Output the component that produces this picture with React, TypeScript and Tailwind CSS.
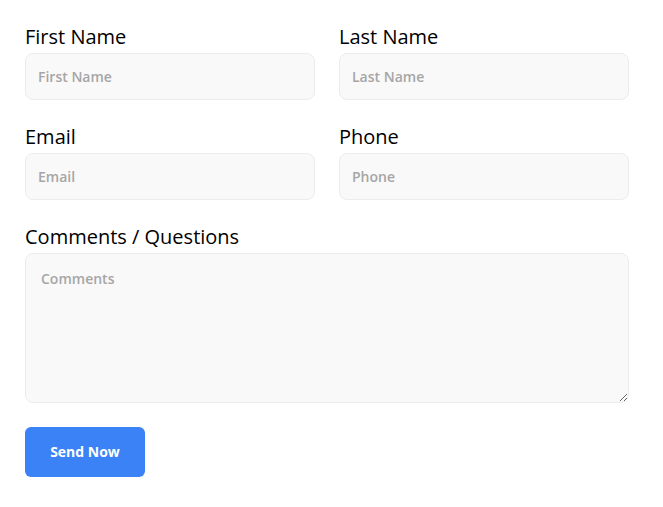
export default function App() {
  const input =
    'w-full h-[47px] rounded-lg border border-[#ececec] bg-[#f9f9f9] px-[12px] text-sm font-semibold text-gray-700 placeholder:font-semibold placeholder:text-[#a6a6a6] outline-none'

  return (
    <div className="min-h-screen bg-white font-['Open_Sans',sans-serif]">
      <form className="w-[604px] ml-[25px] pt-[24px] flex flex-col" onSubmit={e => e.preventDefault()}>
        <div className="grid grid-cols-2 gap-x-[24px] gap-y-[24px]">
          <div>
            <label className="block text-[20px] leading-[25px] font-medium text-black mb-[4px]">First Name</label>
            <input className={input} placeholder="First Name" />
          </div>
          <div>
            <label className="block text-[20px] leading-[25px] font-medium text-black mb-[4px]">Last Name</label>
            <input className={input} placeholder="Last Name" />
          </div>
          <div>
            <label className="block text-[20px] leading-[25px] font-medium text-black mb-[4px]">Email</label>
            <input className={input} placeholder="Email" />
          </div>
          <div>
            <label className="block text-[20px] leading-[25px] font-medium text-black mb-[4px]">Phone</label>
            <input className={input} placeholder="Phone" />
          </div>
          <div className="col-span-2">
            <label className="block text-[20px] leading-[25px] font-medium text-black mb-[4px]">Comments / Questions</label>
            <textarea
              className="block w-full h-[150px] rounded-lg border border-[#ececec] bg-[#f9f9f9] px-[15px] py-[15px] text-sm font-semibold text-gray-700 placeholder:font-semibold placeholder:text-[#a6a6a6] outline-none"
              placeholder="Comments"
            />
          </div>
        </div>
        <button
          type="submit"
          className="mt-[24px] w-[120px] h-[50px] rounded-md bg-[#3b82f6] text-white text-sm font-bold"
        >
          Send Now
        </button>
      </form>
    </div>
  )
}
